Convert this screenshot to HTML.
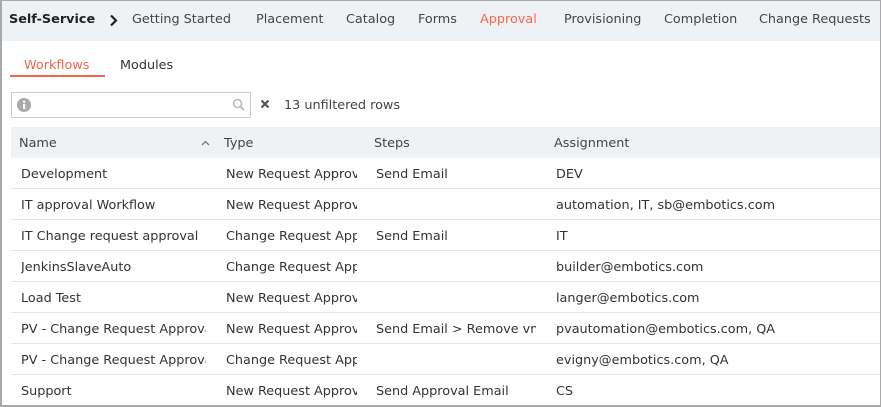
<!DOCTYPE html>
<html><head><meta charset="utf-8"><style>
*{margin:0;padding:0;box-sizing:border-box}
body{width:881px;height:407px;overflow:hidden;background:#fff;font-family:"DejaVu Sans","Liberation Sans",sans-serif;font-size:12.8px;color:#333;position:relative}
.frame{position:absolute;left:0;top:0;width:881px;height:407px;border:1px solid #a9a9a9;border-bottom-width:2px;border-left-width:2px}
.top{position:absolute;left:0;top:0;width:881px;height:41px;background:#eff2f5}
.t{position:absolute;top:12px;white-space:nowrap;color:#444}
.tab{position:absolute;top:58px;white-space:nowrap}
.search{position:absolute;left:11px;top:92px;width:240px;height:26px;border:1px solid #ccc;background:#fff}
.hdr{position:absolute;left:11px;top:127px;width:870px;height:31px;background:#eff2f5}
.row{position:absolute;left:11px;width:870px;height:31px;border-bottom:1px solid #e6e6e6}
.c{position:absolute;top:9px;white-space:nowrap;overflow:hidden}
</style></head><body>
<div class="top"></div>
<div class="t" style="left:9px;font-weight:bold;color:#222">Self-Service</div>
<svg style="position:absolute;left:109px;top:14px" width="9" height="13" viewBox="0 0 9 13"><path d="M2 1.5L7 6.5L2 11.5" fill="none" stroke="#222" stroke-width="2.2"/></svg>
<div class="t" style="left:132px">Getting Started</div>
<div class="t" style="left:256px">Placement</div>
<div class="t" style="left:346px">Catalog</div>
<div class="t" style="left:418px">Forms</div>
<div class="t" style="left:480px;color:#f5664b">Approval</div>
<div class="t" style="left:564px">Provisioning</div>
<div class="t" style="left:664px">Completion</div>
<div class="t" style="left:759px">Change Requests</div>

<div class="tab" style="left:24px;color:#f0664a">Workflows</div>
<div style="position:absolute;left:10px;top:75px;width:95px;height:2px;background:#f0664a"></div>
<div class="tab" style="left:120px">Modules</div>

<div class="search">
<svg style="position:absolute;left:5px;top:5px" width="14" height="14" viewBox="0 0 14 14"><circle cx="7" cy="7" r="7" fill="#aaa"/><rect x="6" y="6" width="2.2" height="5" fill="#fff"/><circle cx="7.1" cy="3.8" r="1.2" fill="#fff"/></svg>
<svg style="position:absolute;left:220px;top:5px" width="13" height="13" viewBox="0 0 13 13"><circle cx="5.5" cy="5.5" r="4" fill="none" stroke="#bbb" stroke-width="1.6"/><path d="M8.5 8.5L12 12" stroke="#bbb" stroke-width="2"/></svg>
</div>
<svg style="position:absolute;left:260px;top:99px" width="10" height="10" viewBox="0 0 10 10"><path d="M1.5 1.5L8.5 8.5M8.5 1.5L1.5 8.5" stroke="#555" stroke-width="2.2"/></svg>
<div style="position:absolute;left:284px;top:98px;color:#444">13 unfiltered rows</div>

<div class="hdr">
<div class="c" style="left:8px;color:#444">Name</div>
<svg style="position:absolute;left:190px;top:13px" width="9" height="6" viewBox="0 0 9 6"><path d="M1 5L4.5 1.5L8 5" fill="none" stroke="#777" stroke-width="1.3"/></svg>
<div class="c" style="left:213px;color:#444">Type</div>
<div class="c" style="left:363px;color:#444">Steps</div>
<div class="c" style="left:543px;color:#444">Assignment</div>
</div>

<div class="row" style="top:158px"><div class="c" style="left:10px;width:195px">Development</div><div class="c" style="left:215px;width:131px">New Request Approval</div><div class="c" style="left:365px;width:160px">Send Email</div><div class="c" style="left:545px">DEV</div></div>
<div class="row" style="top:189px"><div class="c" style="left:10px;width:195px">IT approval Workflow</div><div class="c" style="left:215px;width:131px">New Request Approval</div><div class="c" style="left:545px">automation, IT, sb@embotics.com</div></div>
<div class="row" style="top:220px"><div class="c" style="left:10px;width:195px">IT Change request approval</div><div class="c" style="left:215px;width:131px">Change Request Approval</div><div class="c" style="left:365px;width:160px">Send Email</div><div class="c" style="left:545px">IT</div></div>
<div class="row" style="top:251px"><div class="c" style="left:10px;width:195px">JenkinsSlaveAuto</div><div class="c" style="left:215px;width:131px">Change Request Approval</div><div class="c" style="left:545px">builder@embotics.com</div></div>
<div class="row" style="top:282px"><div class="c" style="left:10px;width:195px">Load Test</div><div class="c" style="left:215px;width:131px">New Request Approval</div><div class="c" style="left:545px">langer@embotics.com</div></div>
<div class="row" style="top:313px"><div class="c" style="left:10px;width:185px">PV - Change Request Approval</div><div class="c" style="left:215px;width:131px">New Request Approval</div><div class="c" style="left:365px;width:160px">Send Email &gt; Remove vm</div><div class="c" style="left:545px">pvautomation@embotics.com, QA</div></div>
<div class="row" style="top:344px"><div class="c" style="left:10px;width:185px">PV - Change Request Approval</div><div class="c" style="left:215px;width:131px">Change Request Approval</div><div class="c" style="left:545px">evigny@embotics.com, QA</div></div>
<div class="row" style="top:375px"><div class="c" style="left:10px;width:195px">Support</div><div class="c" style="left:215px;width:131px">New Request Approval</div><div class="c" style="left:365px;width:160px">Send Approval Email</div><div class="c" style="left:545px">CS</div></div>
<div class="frame"></div>
</body></html>
